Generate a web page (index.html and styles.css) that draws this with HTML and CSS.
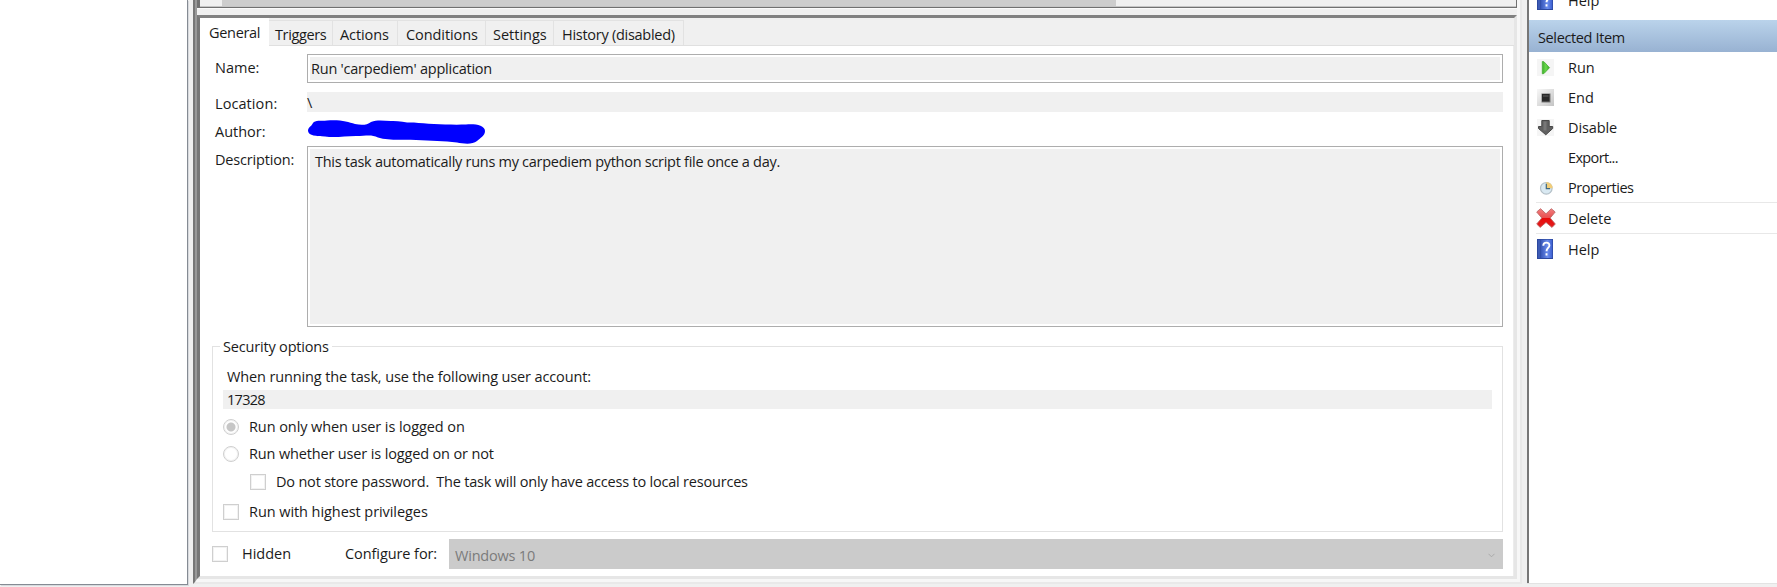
FILE: index.html
```html
<!DOCTYPE html>
<html lang="en">
<head>
<meta charset="utf-8">
<title>Task Scheduler</title>
<link rel="stylesheet" href="styles.css">
</head>
<body>
<div class="window">
  <div class="tree"></div>
  <main class="outer"><div class="outer-in">
    <div class="tasks"><div class="track"><div class="thumb"></div></div></div>
    <div class="split"></div>
    <section class="detail">
      <nav class="tabs">
        <div class="tab active t-general">General</div>
        <div class="tab t-triggers">Triggers</div>
        <div class="tab t-actions">Actions</div>
        <div class="tab t-conditions">Conditions</div>
        <div class="tab t-settings">Settings</div>
        <div class="tab t-history">History (disabled)</div>
      </nav>
      <div class="page">
        <div class="row name"><label class="lbl-name">Name:</label><div class="box"><span class="v-name">Run 'carpediem' application</span></div></div>
        <div class="row location"><label class="lbl-location">Location:</label><div class="flat">\</div></div>
        <div class="row author"><label class="lbl-author">Author:</label>
          <svg class="scribble" width="180" height="26" viewBox="307 119 180 26"><path d="M308 131C308 127 311 127 313 123C315 120 321 121 327 120.500C341 119.500 348 122 355 124C362 125.500 367 125 371 122C378 119.500 384 121 391 121C399 120.500 406 123 414 122.500C428 124 449 125 466 124.500C474 123.500 485 125 485 131C485 136 480 138 477 141C472 145 463 143.500 457 142.500C444 141 431 140.500 416 140C403 139 389 141 378 137.500C371 134 366 136 356 136C345 136 335 138 325 136.500C316 136 309 136 308 131Z" fill="#00f"/></svg>
        </div>
        <div class="row description"><label class="lbl-desc">Description:</label><div class="box"><span class="v-desc">This task automatically runs my carpediem python script file once a day.</span></div></div>
        <fieldset class="security">
          <legend>Security options</legend>
          <p class="prompt">When running the task, use the following user account:</p>
          <div class="account"><span>17328</span></div>
          <div class="opt"><i class="radio on"></i><span class="o-only">Run only when user is logged on</span></div>
          <div class="opt o2"><i class="radio"></i><span class="o-whether">Run whether user is logged on or not</span></div>
          <div class="opt o3"><i class="check"></i><span class="o-store">Do not store password.&nbsp; The task will only have access to local resources</span></div>
          <div class="opt o4"><i class="check"></i><span class="o-priv">Run with highest privileges</span></div>
        </fieldset>
        <div class="footer">
          <i class="check"></i><span class="hidden-label">Hidden</span><span class="config-label">Configure for:</span>
          <div class="combo"><span>Windows 10</span><svg width="7" height="5" viewBox="0 0 7 5"><path d="M.5.8 3.500 3.800 6.500.8" fill="none" stroke="#aaa"/></svg></div>
        </div>
      </div>
    </section>
  </div></main>
  <aside class="actions">
    <div class="act first"><span class="ico"><svg width="16" height="20" viewBox="0 0 16 20"><use href="#book"/></svg></span><span class="a-help">Help</span></div>
    <div class="head"><span>Selected Item</span></div>
    <div class="act"><span class="ico"><svg width="17" height="17" viewBox="0 0 17 17"><defs><linearGradient id="green"><stop stop-color="#3eae2b"/><stop offset=".5" stop-color="#69d84c"/><stop offset="1" stop-color="#38a925"/></linearGradient></defs><path d="M0 0h17v17H0z" fill="#f5f5f5"/><path d="M5.300 2.500 7 2.800 12.500 8.700 7 14.500 5.300 14.800Z" fill="url(#green)" stroke="#45ad32" stroke-width=".8"/></svg></span><span class="a-run">Run</span></div>
    <div class="act"><span class="ico"><svg width="17" height="17" viewBox="0 0 17 17"><defs><linearGradient id="plate" x2="1" y2="1"><stop stop-color="#f8f8f8"/><stop offset="1" stop-color="#c4c4c4"/></linearGradient></defs><path d="M0 0h17v17H0z" fill="url(#plate)"/><path d="M4.500 4.500h9v9h-9z" fill="#777"/><path d="M5 5h7.500v7.500H5z" fill="#282828"/><path d="M6 6h5.500v2H6z" fill="#444"/></svg></span><span class="a-end">End</span></div>
    <div class="act"><span class="ico"><svg width="17" height="17" viewBox="0 0 17 17"><path d="M0 0h17v17H0z" fill="#f5f5f5"/><path d="M4.800 1.500h7.400v6h3.500v2L8.800 15.800 1.500 9.500v-2h3.300Z" fill="#606060" stroke="#484848"/><path d="M6.500 2.500h3v9h-3z" fill="#777"/></svg></span><span class="a-disable">Disable</span></div>
    <div class="act"><span class="ico"></span><span class="a-export">Export...</span></div>
    <div class="act"><span class="ico"><svg width="17" height="17" viewBox="0 0 17 17"><circle cx="9.300" cy="9.300" r="5.800" fill="#d9e9f2" stroke="#b4c0c8" stroke-width="1.200"/><path d="M9.300 9.300V3A6.300 6.300 0 0 1 15.600 9.300Z" fill="#f2cd78"/><path d="M9.300 4.800v4.900h3.800" fill="none" stroke="#41677d" stroke-width="1.200"/></svg></span><span class="a-properties">Properties</span></div>
    <hr>
    <div class="act"><span class="ico wide"><svg width="20" height="20" viewBox="0 0 20 20"><defs><linearGradient id="red" x2="0" y2="1"><stop stop-color="#f28080"/><stop offset=".48" stop-color="#e85050"/><stop offset=".52" stop-color="#e80a0a"/><stop offset="1" stop-color="#e32020"/></linearGradient></defs><path d="M.7 4 4.500.7 10 5.800 15.300.7 19.200 4 14.200 10 19.300 16 16 19.400 10 14.400 4.200 19.400.7 16 5.800 10Z" fill="url(#red)" stroke="#bd6a6a" stroke-width=".9" stroke-linejoin="round"/></svg></span><span class="a-delete">Delete</span></div>
    <hr>
    <div class="act"><span class="ico"><svg width="16" height="20" viewBox="0 0 16 20"><defs><linearGradient id="blue"><stop stop-color="#3453b5"/><stop offset=".6" stop-color="#6a8cec"/><stop offset="1" stop-color="#3c5fd0"/></linearGradient></defs><g id="book"><path d="M0 0h16v20H0z" fill="#2c489f"/><path d="M3.500 .7h11.800v18.300H3.500z" fill="url(#blue)"/><path d="M1 1h2v18H1z" fill="#3d5bb5"/><path d="M6.300 6.800C6.300 2.700 12.400 2.600 12.400 6.400C12.400 9 9.500 9 9.500 12.300M9.500 14.300v2.300" fill="none" stroke="#fff" stroke-width="1.900"/></g></svg></span><span class="a-help">Help</span></div>
  </aside>
</div>
</body>
</html>
```
FILE: styles.css
```css
* { box-sizing: border-box; }
body { margin: 0; background: #f0f0f0; color: #1b1b1b; font: 14.5px/20px "Open Sans", "Noto Sans", sans-serif; overflow: hidden; }
p { margin: 0; }
.window { display: flex; width: 1777px; height: 587px; align-items: flex-start; }
.tree { width: 188px; height: 585px; margin-right: 5px; background: #fff; border-right: 1px solid #858b93; border-bottom: 1px solid #858b93; box-shadow: 1px 1px #d8dade; flex: none; }

/* bevelled frames */
.outer { width: 1329px; height: 584px; border: solid; border-width: 0 2px 2px; border-color: #777 #e9e9e9 #e9e9e9 #777; flex: none; }
.outer-in { height: 100%; display: flex; flex-direction: column; border: solid; border-width: 0 3px 3px 2px; border-color: #999 #f7f7f7 #f7f7f7 #999; }
.tasks { height: 8px; border: solid; border-width: 0 1px 1px 3px; border-color: #717171; background: #f0f0f0; padding-left: 22px; }
.track { height: 7px; border-bottom: 1px solid #c5c5c5; margin-left: -22px; padding-left: 22px; }
.thumb { width: 894px; height: 6px; background: #cdcdcd; }
.split { height: 7px; background: #f0f0f0; border-top: 1px solid #fafafa; }
.detail { flex: 1; display: flex; flex-direction: column; border: 3px solid; border-color: #818181 #e6e6e6 #e6e6e6 #777; }

.tabs { display: flex; height: 28px; background: #f0f0f0; padding-top: 2px; border-bottom: 1px solid #e0e0e0; }
.tab { height: 25px; padding: 4px 0 0 8px; border: 1px solid #e2e2e2; border-width: 1px 1px 0 0; white-space: nowrap; }
.tab.active { height: 28px; margin: -2px 0 -1px; padding: 5px 0 0 9px; background: #fff; border: 0; }
.t-general { width: 69px; letter-spacing: -.31px; }
.t-triggers { width: 64px; padding-left: 6px; letter-spacing: -.38px; }
.t-actions { width: 65px; padding-left: 7px; letter-spacing: -.1px; }
.t-conditions { width: 88px; letter-spacing: -.08px; }
.t-settings { width: 68px; padding-left: 7px; letter-spacing: 0; }
.t-history { width: 130px; letter-spacing: -.27px; }

.page { flex: 1; background: #fff; border-right: 1px solid #ececec; padding: 8px 10px 0 12px; }
.row { display: grid; grid-template-columns: 92px 1fr; margin-left: 3px; }
.box { border: 1px solid #adadad; background: #f0f0f0; box-shadow: inset 0 0 0 2px #fff; }
.name .box { height: 29px; padding: 4px 3px; }
.name label { padding-top: 4px; }
.location { margin-top: 9px; }
.location .flat { height: 20px; background: #f0f0f0; line-height: 21px; }
.location label { padding-top: 2px; height: 20px; }
.author { height: 26px; margin-top: 7px; }
.author label { padding-top: 3px; }
.description { margin-top: 1px; }
.description .box { height: 181px; padding: 5px 7px; }
.description label { padding-top: 4px; }
.lbl-location { letter-spacing: .08px; }
.lbl-desc { letter-spacing: -.18px; }
.v-name { letter-spacing: -.23px; }
.v-desc { letter-spacing: -.28px; }

.security { margin: 9px 0 0; padding: 10px 10px 0; height: 196px; border: 1px solid #e2e2e2; min-width: 0; }
.security legend { position: relative; top: 1px; margin-left: -3px; padding: 0 3px; letter-spacing: -.18px; }
.prompt { height: 20px; padding-left: 4px; line-height: 22px; letter-spacing: -.13px; }
.account { height: 19px; margin-top: 4px; padding-left: 4px; background: #f0f0f0; line-height: 19px; letter-spacing: -.7px; }
.opt { display: flex; align-items: center; height: 20px; margin-top: 8px; }
.opt span { margin: -1px 0 0 10px; }
.o2 { margin-top: 7px; }
.o3 { margin-top: 8px; padding-left: 27px; }
.o4 { margin-top: 10px; }
.radio, .check { flex: none; width: 16px; height: 16px; border: 1px solid #cfcfcf; background: #fff; box-shadow: inset 0 0 0 1px #f2f2f2; }
.radio { border-radius: 50%; }
.radio.on { background: radial-gradient(circle, #c6c6c6 0 4px, #fff 5px); }
.o-only { letter-spacing: -.08px; }
.o-whether { letter-spacing: -.15px; }
.o-store { letter-spacing: -.2px; }
.o-priv { letter-spacing: -.07px; }

.footer { display: flex; align-items: center; height: 30px; margin-top: 7px; }
.hidden-label { width: 103px; margin-left: 14px; }
.config-label { width: 104px; letter-spacing: -.08px; }
.combo { flex: 1; height: 30px; display: flex; align-items: center; justify-content: space-between; padding: 3px 8px 0 6px; background: #cbcbcb; color: #7b7b7b; letter-spacing: -.2px; }

.actions { flex: 1; height: 583px; margin-left: 5px; background: #fff; border-left: 2px solid #777; box-shadow: 0 1px #e3e3e3; }
.head { height: 32px; margin-top: 5px; padding: 8px 9px 0; background: linear-gradient(#bad3eb, #98b2d2); letter-spacing: -.37px; }
.act { display: flex; align-items: center; height: 30px; padding-left: 8px; }
.act.first { margin-top: -15px; }
.act > span:last-child { padding-top: 2px; }
.ico { display: flex; width: 31px; }
.ico svg { display: block; flex: none; }
.ico.wide svg { margin-left: -1px; }
.actions hr { height: 1px; margin: 0 0 0 7px; border: 0; background: #e8e8e8; }
.a-disable { letter-spacing: -.1px; }
.a-export { letter-spacing: -.65px; }
.a-properties { letter-spacing: -.47px; }
.a-delete { letter-spacing: -.1px; }
```
